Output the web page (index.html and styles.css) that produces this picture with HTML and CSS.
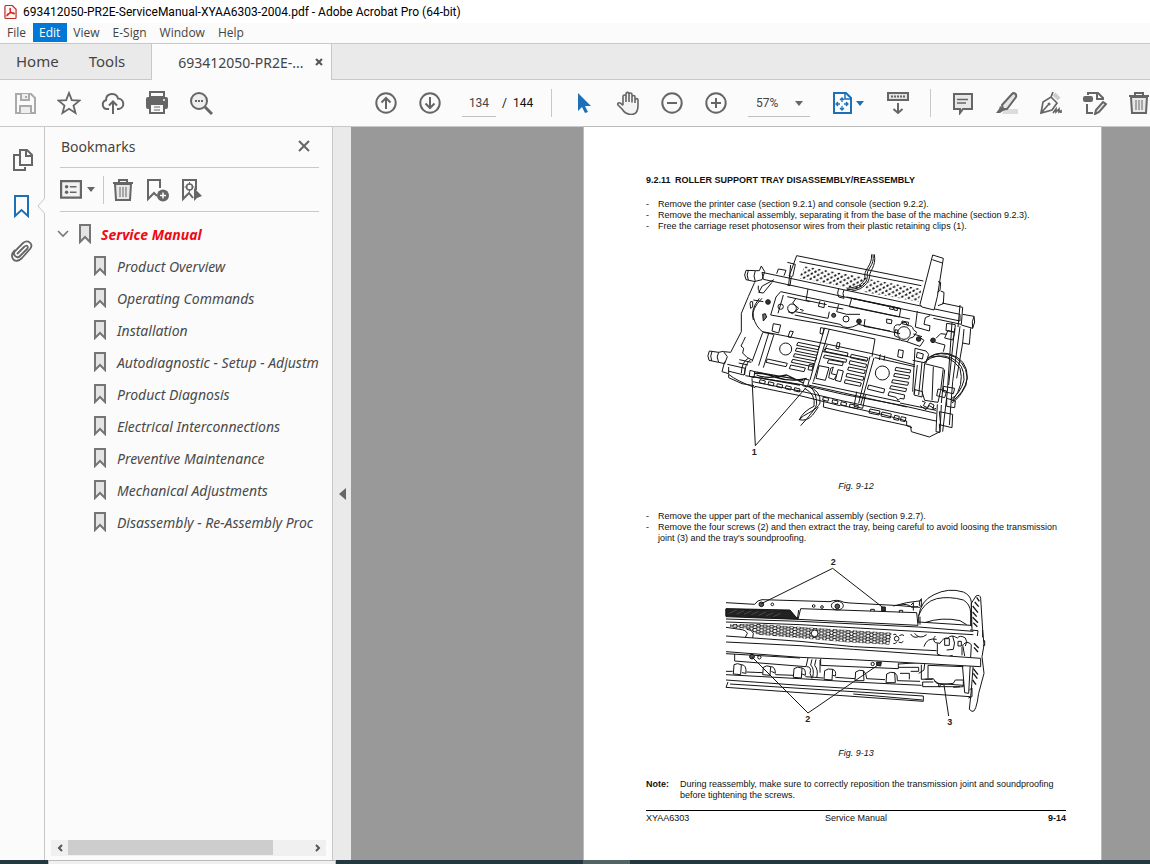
FILE: index.html
```html
<!DOCTYPE html>
<html lang="en">
<head>
<meta charset="utf-8">
<title>693412050-PR2E-ServiceManual-XYAA6303-2004.pdf - Adobe Acrobat Pro (64-bit)</title>
<link rel="stylesheet" href="styles.css">
</head>
<body>
<svg class="defs" aria-hidden="true">
  <symbol id="bm" viewBox="0 0 12 20"><path d="M1 1H11V18L6 13L1 18Z" fill="#e4e4e4" stroke="#757575" stroke-width="2"/></symbol>
  <symbol id="caret" viewBox="0 0 8 5"><path d="M0 0H8L4 5Z" fill="currentColor"/></symbol>
  <symbol id="trash" viewBox="0 0 24 24"><g fill="none" stroke="currentColor" stroke-width="2"><path d="M2 5H22M8 5V2H16V5"/><path d="M4 6L5 22H19L20 6Z" fill="#e8e8e8"/><path d="M9 9V19M12 9V19M15 9V19" stroke-width="1"/></g></symbol>
</svg>

<header class="titlebar">
  <svg class="logo" viewBox="0 0 14 16"><path d="M1 2Q1 1 2 1H9L13 5V14Q13 15 12 15H2Q1 15 1 14Z" fill="#fff4f3" stroke="#b3332b" stroke-width="1.3"/><path d="M3 12C5 11 7 8 7 5C7 3.600 6 4 6.300 5.500C7 8 9 10 11 10C12 9 9 8.500 7 9C5 9.400 3 10.500 3 12Z" fill="none" stroke="#d3241b" stroke-width="1.200"/></svg>
  <h1>693412050-PR2E-ServiceManual-XYAA6303-2004.pdf - Adobe Acrobat Pro (64-bit)</h1>
</header>
<nav class="menubar" aria-label="Menu">
  <button>File</button><button class="active">Edit</button><button>View</button><button>E-Sign</button><button>Window</button><button>Help</button>
</nav>
<nav class="tabs" aria-label="Tabs">
  <button class="tab-home">Home</button><button class="tab-tools">Tools</button>
  <div class="tab-doc"><button>693412050-PR2E-...</button><button class="tab-close" aria-label="Close tab"><svg width="8" height="8" viewBox="0 0 8 8"><path d="M1 1L7 7M7 1L1 7" stroke="#555" stroke-width="2"/></svg></button></div>
</nav>

<div class="toolbar" role="toolbar">
  <div class="group file-group">
    <button aria-label="Save" class="dim"><svg viewBox="0 0 24 24"><g fill="none" stroke="currentColor" stroke-width="2"><path d="M3 3H18L22 7V22H3Z"/><path d="M8 3V9H16V3M7 22V15H18V22" fill="#eee"/><path d="M13 5V7"/></g></svg></button>
    <button aria-label="Star"><svg viewBox="0 0 24 24"><path d="M12 2L14.800 9.200L22.500 9.600L16.500 14.500L18.500 22L12 17.800L5.500 22L7.500 14.500L1.500 9.600L9.200 9.200Z" fill="none" stroke="currentColor" stroke-width="1.800"/></svg></button>
    <button aria-label="Upload"><svg viewBox="0 0 24 24"><g fill="none" stroke="currentColor" stroke-width="2"><path d="M8 18H6A4.500 4.500 0 0 1 5 9.200C5 1.500 15.500 1 17 7.500A5.300 5.300 0 0 1 18 18H16M12 23V11M8 14.500L12 10.500L16 14.500"/></g></svg></button>
    <button aria-label="Print"><svg viewBox="0 0 24 24"><path d="M5 1H19V6H5Z" fill="none" stroke="currentColor" stroke-width="2"/><rect x="1" y="6" width="22" height="12" rx="2" fill="currentColor"/><path d="M5 13H19V22H5Z" fill="#fafafa" stroke="currentColor" stroke-width="2"/><path d="M9 16H15M9 19H15" stroke="currentColor"/><path d="M18 9H20" stroke="#fff" stroke-width="1.500"/></svg></button>
    <button aria-label="Find"><svg viewBox="0 0 24 24"><circle cx="10" cy="10" r="8" fill="#eee" stroke="currentColor" stroke-width="2"/><path d="M16 16L23 23" stroke="currentColor" stroke-width="3"/><path d="M6 10H14" stroke="currentColor" stroke-width="2" stroke-dasharray="2 1"/></svg></button>
  </div>
  <div class="group page-group">
    <button aria-label="Previous page"><svg viewBox="0 0 24 24"><g fill="none" stroke="currentColor" stroke-width="2"><circle cx="12" cy="12" r="9.700"/><path d="M12 18V7M7.500 11.500L12 7L16.500 11.500"/></g></svg></button>
    <button aria-label="Next page"><svg viewBox="0 0 24 24"><g fill="none" stroke="currentColor" stroke-width="2"><circle cx="12" cy="12" r="9.700"/><path d="M12 6V17M7.500 12.500L12 17L16.500 12.500"/></g></svg></button>
    <input class="page-no" type="text" value="134" aria-label="Page number"><span class="page-total">/&nbsp; 144</span>
  </div>
  <div class="group view-group">
    <button aria-label="Select" class="blue"><svg viewBox="0 0 24 24"><path d="M6 2V20L10 16L13 22L16 21L13 15H19Z" fill="currentColor"/></svg></button>
    <button aria-label="Pan"><svg viewBox="0 0 24 24"><path d="M7 14V5.500C7 3.500 10 3.500 10 5.500V11V3C10 .8 13 .8 13 3V11V3.500C13 1.500 16 1.500 16 3.500V11.500V6C16 4 19 4 19 6V12V9C19 7.200 22 7.200 22 9V15C22 21 19 23.500 15 23.500C10 23.500 8 21 6 18L2 14C1 12 3 11 5 12.500L7 14.500" fill="#f4f4f4" stroke="currentColor" stroke-width="1.600"/></svg></button>
    <button aria-label="Zoom out"><svg viewBox="0 0 24 24"><g fill="none" stroke="currentColor" stroke-width="2"><circle cx="12" cy="12" r="9.700"/><path d="M7 12H17"/></g></svg></button>
    <button aria-label="Zoom in"><svg viewBox="0 0 24 24"><g fill="none" stroke="currentColor" stroke-width="2"><circle cx="12" cy="12" r="9.700"/><path d="M7 12H17M12 7V17"/></g></svg></button>
    <div class="zoom"><select aria-label="Zoom level"><option>57%</option></select><svg class="caret"><use href="#caret"/></svg></div>
    <button aria-label="Fit page" class="blue fit"><svg viewBox="0 0 24 24"><g fill="none" stroke="currentColor" stroke-width="2"><path d="M4 2H16L21 7V22H4Z"/><path d="M15 2V8H21" stroke-width="1.500"/><path d="M12 7V11M12 15V19M6 13H10M14 13H18M10 9L12 7L14 9M10 17L12 19L14 17M8 11L6 13L8 15M16 11L18 13L16 15" stroke-width="1.300"/></g></svg><svg class="caret"><use href="#caret"/></svg></button>
    <button aria-label="Scrolling"><svg viewBox="0 0 24 24"><path d="M2 2H22V9H2Z" fill="#e4e4e4" stroke="currentColor" stroke-width="2"/><path d="M5 5.500H19" stroke="currentColor" stroke-width="2" stroke-dasharray="2 1"/><path d="M12 12V22M7.500 18L12 22L16.500 18" fill="none" stroke="currentColor" stroke-width="2"/></svg></button>
  </div>
  <div class="group edit-group">
    <button aria-label="Comment"><svg viewBox="0 0 24 24"><path d="M3 3H21V18H12L9 22V18H3Z" fill="#e8e8e8" stroke="currentColor" stroke-width="2"/><path d="M6 8.500H17M6 12H15" stroke="currentColor" stroke-width="1.300"/></svg></button>
    <button aria-label="Highlight"><svg viewBox="0 0 24 24"><path d="M10 18H23V23H7Z" fill="#dcdcdc"/><path d="M7 14L17 3C19 1 22 3 21 6L12 18L8 18Z" fill="#e4e4e4" stroke="currentColor" stroke-width="2"/><path d="M5 15L11 19L8 20L5 22H1L4 18Z" fill="currentColor"/></svg></button>
    <button aria-label="Sign"><svg viewBox="0 0 24 24"><path d="M15 3L20 8" stroke="#ccc" stroke-width="4"/><path d="M2 22L4 11L12 6L18 12L13 19ZM2 22L9 14M12 6L14 1" fill="none" stroke="currentColor" stroke-width="1.700"/><circle cx="10" cy="13" r="1.500" fill="currentColor"/><path d="M14 22L17 18V21L20 18V21L22 20V22" fill="none" stroke="currentColor" stroke-width="1.700"/></svg></button>
    <button aria-label="Edit PDF"><svg viewBox="0 0 24 24"><path d="M5 4V2H15L20 7V9M4 13V22H10M14 2V8H20" fill="none" stroke="currentColor" stroke-width="2"/><rect y="5" width="10" height="6" rx="2" fill="currentColor"/><path d="M12 23L13 19L20 11L23 13L16 21Z" fill="#eee" stroke="currentColor" stroke-width="2"/></svg></button>
    <button aria-label="Delete"><svg><use href="#trash"/></svg></button>
  </div>
</div>

<main class="workspace">
  <nav class="rail" aria-label="Panels">
    <button aria-label="Thumbnails"><svg viewBox="0 0 24 24"><g fill="none" stroke="currentColor" stroke-width="2"><path d="M8 7H3V22H14V19"/><path d="M9 2H16L21 7V17H9ZM15 2V8H21"/></g></svg></button>
    <button aria-label="Bookmarks" class="blue"><svg viewBox="0 0 24 24"><path d="M4 2H17V22L10.500 16L4 22Z" fill="none" stroke="currentColor" stroke-width="2"/></svg></button>
    <button aria-label="Attachments"><svg viewBox="0 0 24 24"><path d="M6 14L13 7C16 4 18 7 16 9L9 16C6 19 1 15 4 11L12 3C17 -1 23 4 19 9L11 18C8 21 4 22 2 19C0 16 1 13 4 10" fill="none" stroke="currentColor" stroke-width="1.800"/></svg></button>
    <svg class="notch" width="8" height="16" viewBox="0 0 8 16"><path d="M8 0L1 8L8 16" fill="#fbfbfb" stroke="#c8c8c8"/></svg>
  </nav>
  <aside class="panel">
    <div class="panel-head"><h2>Bookmarks</h2><button aria-label="Close panel"><svg width="12" height="12" viewBox="0 0 12 12"><path d="M1 1L11 11M11 1L1 11" stroke="#666" stroke-width="2"/></svg></button></div>
    <div class="panel-tools">
      <button aria-label="Options" class="options"><svg class="list-icon" viewBox="0 0 20 18"><path d="M1 1H19V16H1Z" fill="#f2f2f2" stroke="currentColor" stroke-width="2"/><path d="M9 6H15M9 11H15" stroke="currentColor" stroke-width="1.500"/><circle cx="6" cy="6" r="1.600" fill="currentColor"/><circle cx="6" cy="11" r="1.600" fill="currentColor"/></svg><svg class="caret"><use href="#caret"/></svg></button>
      <button aria-label="Delete bookmark"><svg><use href="#trash"/></svg></button>
      <button aria-label="New bookmark"><svg viewBox="0 0 24 24"><path d="M15 10V2H3V21L9 15L12 18" fill="none" stroke="currentColor" stroke-width="2"/><circle cx="18" cy="17.500" r="6" fill="currentColor"/><path d="M15 17.500H21M18 14.500V20.500" stroke="#fff" stroke-width="1.500"/></svg></button>
      <button aria-label="Find bookmark"><svg viewBox="0 0 24 24"><path d="M17 12V2H4V21L10 15L14 20" fill="none" stroke="currentColor" stroke-width="2"/><circle cx="10.500" cy="9" r="3" fill="none" stroke="currentColor" stroke-width="1.500"/><path d="M10.500 4V7M10.500 11V14M5.500 9H8.500M12.500 9H15.500" stroke="currentColor"/><path d="M15 10V23L18 20L23 18Z" fill="currentColor"/></svg></button>
    </div>
    <ul class="tree">
      <li class="root"><button aria-label="Collapse" class="twist"><svg width="12" height="8" viewBox="0 0 12 8"><path d="M1 1L6 6L11 1" fill="none" stroke="#777" stroke-width="1.600"/></svg></button><svg class="bm"><use href="#bm"/></svg><a href="#p">Service Manual</a></li>
      <li><svg class="bm"><use href="#bm"/></svg><a href="#p">Product Overview</a></li>
      <li><svg class="bm"><use href="#bm"/></svg><a href="#p">Operating Commands</a></li>
      <li><svg class="bm"><use href="#bm"/></svg><a href="#p">Installation</a></li>
      <li><svg class="bm"><use href="#bm"/></svg><a href="#p">Autodiagnostic - Setup - Adjustm</a></li>
      <li><svg class="bm"><use href="#bm"/></svg><a href="#p">Product Diagnosis</a></li>
      <li><svg class="bm"><use href="#bm"/></svg><a href="#p">Electrical Interconnections</a></li>
      <li><svg class="bm"><use href="#bm"/></svg><a href="#p">Preventive Maintenance</a></li>
      <li><svg class="bm"><use href="#bm"/></svg><a href="#p">Mechanical Adjustments</a></li>
      <li><svg class="bm"><use href="#bm"/></svg><a href="#p">Disassembly - Re-Assembly Proc</a></li>
    </ul>
    <div class="hscroll"><button aria-label="Scroll left"><svg width="6" height="8" viewBox="0 0 6 8"><path d="M5 1L2 4L5 7" fill="none" stroke="#555" stroke-width="2"/></svg></button><div class="track"><div class="thumb"></div></div><button aria-label="Scroll right"><svg width="6" height="8" viewBox="0 0 6 8"><path d="M1 1L4 4L1 7" fill="none" stroke="#555" stroke-width="2"/></svg></button></div>
  </aside>
  <button class="splitter" aria-label="Hide panel"><svg width="7" height="12" viewBox="0 0 7 12"><path d="M7 0V12L0 6Z" fill="#666"/></svg></button>
  <section class="viewer">
    <article class="page" id="p">
      <h3><span>9.2.11</span> ROLLER SUPPORT TRAY DISASSEMBLY/REASSEMBLY</h3>
      <ul class="steps">
        <li>Remove the printer case (section 9.2.1) and console (section 9.2.2).</li>
        <li>Remove the mechanical assembly, separating it from the base of the machine (section 9.2.3).</li>
        <li>Free the carriage reset photosensor wires from their plastic retaining clips (1).</li>
      </ul>
      <figure class="fig1">
        <svg viewBox="0 0 870 660" width="290" height="220" role="img" aria-label="Mechanical assembly, wires and clips">
          <defs><pattern id="holes" width="20" height="16" patternUnits="userSpaceOnUse" patternTransform="rotate(11)"><path d="M3 7L8 2M13 15L18 10" stroke="#111" stroke-width="5.500"/></pattern></defs>
          <g class="ink">
            <!-- rear perforated tray -->
            <path d="M268 92L290 32L670 108M298 50L664 122M262 52L286 58L278 95M235 72L258 76L252 92M235 72L230 86"/>
            <path d="M314 64L502 99L482 136L296 100ZM510 103L665 132L655 170L490 140Z" fill="url(#holes)" stroke="none"/>
            <path d="M519 28C525 65 497 70 502 95C501 120 475 134 440 134M515 28C517 64 489 74 495 98C490 120 466 128 440 130M523 28C530 66 506 78 508 99C502 124 475 136 455 138"/>
            <!-- cross bar -->
            <path d="M186 82L430 134L780 208V228L430 155L190 103Z" fill="#fff"/>
            <path d="M272 60L266 120M266 92L274 94L270 122L262 120M416 130Q410 145 416 156L432 160Q426 144 432 134"/>
            <!-- left side frame and rollers -->
            <path d="M138 76Q130 90 138 104L166 110Q158 92 166 77ZM145 76Q138 90 145 105M166 77L178 77L184 63L194 80L186 104L166 109M164 112L145 155L124 205V260L92 322L72 320"/>
            <path d="M28 318Q20 333 27 346L56 352Q47 335 56 322ZM36 319Q29 333 35 348M56 322L70 319L82 335L74 356L56 352M74 350L66 380L86 386L86 366M82 358L136 370L132 390L84 378"/>
            <path d="M222 104L187 123L176 142L190 144L216 112M175 122Q172 134 180 142M186 160Q154 192 160 215Q166 245 190 262L220 268M178 160Q150 195 160 225M160 165L190 170M152 190L150 175Q150 167 158 170V186ZM123 303Q130 290 136 276M123 303L131 310L128 324Q140 340 158 346M188 263L156 350M222 268L190 368M206 265L176 362M220 236L242 240L236 264L216 258Z"/>
            <path d="M188 208L196 206L200 216L190 228Z" fill="#777"/>
            <circle cx="204" cy="171" r="7" fill="#333"/><circle cx="242" cy="185" r="8"/><circle cx="276" cy="190" r="13"/><circle cx="401" cy="211" r="6" fill="#555"/><circle cx="438" cy="222" r="9"/><circle cx="477" cy="229" r="7" fill="#333"/>
            <!-- carriage channel -->
            <path d="M242 140L630 222M242 140L228 156L212 210L420 246L600 285M250 150L234 205M262 155L330 170M288 160L278 174L296 190L278 206L264 200M324 132L318 166L380 179M360 168L355 184L372 188L374 172M384 184L430 192M388 200L384 220L286 200M284 210L420 238Q440 258 475 238L600 266M416 178L410 200L440 208L480 208M455 160L448 185L598 216L602 192L455 160M440 156L602 190M495 222L492 244L570 258M300 193L310 196L306 200"/>
            <path d="M270 258L280 260L272 278L264 275ZM362 248L372 250L368 268L360 265ZM412 292L420 294L416 312L408 309ZM570 183L580 186V194L569 192ZM582 186L592 189V197L582 195Z"/>
            <!-- base plate, panels and vents -->
            <path d="M188 260L375 296L525 328L645 360M375 250L525 282L516 335M388 252L340 410M374 248L330 405M382 300L370 320L500 346M522 338L482 480M510 334L476 475M525 338L645 365M538 345L541 328M552 347L554 332M645 310L638 440"/>
            <circle cx="257" cy="312" r="18"/><circle cx="547" cy="384" r="21"/>
            <path d="M294 292L358 305L354 314L290 301ZM290 309L354 322L350 331L286 318ZM284 326L350 339L346 348L280 335ZM278 343L342 356L338 365L274 352ZM202 342L262 355L258 365L198 352ZM272 360L316 369L312 380L268 371ZM328 358L340 360L336 376L324 374Z"/>
            <path d="M378 310L444 324L442 333L374 319ZM374 330L440 343L438 352L370 338ZM454 328L504 339L501 349L451 338ZM450 347L500 358L497 368L447 357ZM446 366L496 376L493 386L443 375ZM441 385L492 396L489 406L438 395ZM436 404L484 414L481 424L433 414ZM386 344L430 352L427 362L382 354ZM357 362L387 368L376 406L348 400ZM392 370L400 366L394 386L410 390L402 404L386 398ZM414 374L430 378L422 410L406 406Z"/>
            <path d="M588 367L632 375L630 384L585 376ZM584 385L629 393L626 402L581 394ZM578 404L626 412L623 421L575 413ZM573 422L620 431L617 440L569 431ZM568 440L614 450L612 462L600 460L594 466L588 457L564 451ZM506 420L554 432L551 444L502 432Z"/>
            <!-- front edge -->
            <path d="M136 392L300 418L430 448L600 480L708 505M158 410L300 438L430 468L708 528M164 424L300 452L420 482M336 414L600 470M325 420L620 486M470 440L462 484L488 490L496 450M86 388Q110 408 166 428M86 388V398L126 416L162 422M372 464L370 486L420 498M420 480L546 508L620 528V542L636 548M420 498L632 544L634 560L688 576L720 560L718 536"/>
            <path d="M180 404l16 4-2 9-16-4zM206 410l16 4-2 9-16-4zM232 416l16 4-2 9-16-4zM258 422l16 4-2 9-16-4zM284 428l16 4-2 9-16-4zM370 456l16 4-2 9-16-4zM398 464l16 4-2 9-16-4zM424 470l16 4-2 9-16-4zM450 477l25 5-2 9-25-5zM510 492l30 6-3 12-30-6zM546 501l28 6-3 12-28-6zM584 511l14 3-3 12-14-3zM604 515l14 3-3 12-14-3z"/>
            <path d="M162 380L310 406M162 386Q190 382 224 396Q270 412 320 400M158 395L300 420M170 390Q200 404 260 390L310 414" stroke-width="4"/>
            <path d="M145 340Q125 350 124 385M152 344Q134 356 134 390M118 344L154 352M116 354L144 360M314 402L328 405L322 426L308 422ZM150 376L164 380L162 398L148 394Z"/>
            <path d="M322 424Q364 436 360 474Q355 488 326 504Q308 512 298 524Q320 530 338 510L355 486M330 426Q350 440 350 478Q348 492 302 542M314 430Q348 448 342 484Q310 498 298 524"/>
            <!-- upright bracket and right end -->
            <path d="M698 30L730 40L712 155L702 195L666 186L660 178Z" fill="#fff"/>
            <path d="M697 44L727 54M714 110L722 112L720 136L712 142M722 138L732 142L730 176L714 182M726 174L788 187L784 238L700 220M780 180L774 246M788 208L822 214Q814 228 818 250L784 240M822 214Q828 230 818 250M812 250L808 298L788 294L792 252M652 198L646 246L688 258L690 242L672 238L676 218L690 212M756 232L742 440L728 560M780 244L758 410L748 540M764 250L746 420M788 294L770 400"/>
            <circle cx="612" cy="264" r="19"/><path d="M582 250Q584 236 600 240L606 232H618L622 242Q638 240 640 254L650 262L640 276L628 280L622 290L602 286L596 278L584 272Z"/>
            <path d="M560 222l16 3-2 11-14-2zM586 254l8 2-1 8-8-2zM606 228l20 4-2 8-18-4zM596 314l14 3-3 22-14-4zM652 322l18 5-3 15-18-5zM645 310L678 318L686 328L678 354L638 346M620 290L660 304L672 286L658 276"/>
            <circle cx="656" cy="282" r="7" fill="#333"/><circle cx="699" cy="286" r="7" fill="#333"/><path d="M640 267l26 8M708 280L722 266L740 268M706 292L735 300L730 320M740 235l26 4-2 22-26-4zM744 256l20 7-6 22-24-6z"/>
            <!-- motor and cable loop -->
            <path d="M674 356L666 440L674 466L714 472L722 436L730 370L674 356M652 360L642 446M666 352L656 450M700 365L696 466M734 374L724 474M645 434L668 440L666 456L642 450ZM714 432L740 438L734 458L710 452Z"/>
            <path d="M678 346Q702 318 746 326Q804 342 802 400Q792 446 754 470M672 352Q712 320 756 340Q794 358 792 405Q782 446 750 464M682 340Q720 314 765 336Q812 370 798 420Q780 458 756 474M690 336Q748 324 780 370Q794 420 758 466"/>
            <path d="M666 468l10 4-6 10 12 6 8-14 12 6-4 14 10-4M660 482l18 12 10-12 14 8M730 424l34 6-4 16-30-6zM740 460l26 8-2 20-24-4zM718 500L758 508L756 548L722 540ZM712 478L708 560L720 562L724 480M600 474L708 496"/>
            <path d="M156 400L166 602L318 428"/>
          </g>
          <text x="155" y="630">1</text>
        </svg>
        <figcaption>Fig. 9-12</figcaption>
      </figure>
      <ul class="steps">
        <li>Remove the upper part of the mechanical assembly (section 9.2.7).</li>
        <li>Remove the four screws (2) and then extract the tray, being careful to avoid loosing the transmission<br>joint (3) and the tray's soundproofing.</li>
      </ul>
      <figure class="fig2">
        <svg viewBox="0 0 825 540" width="275" height="180" role="img" aria-label="Tray screws and transmission joint">
          <defs><pattern id="mesh" width="20" height="18" patternUnits="userSpaceOnUse" patternTransform="rotate(3)"><path d="M0 5L4 1H10L14 5L10 9H4ZM14 5H20M10 9L13 14L20 13M4 9L1 14L4 18M13 14L10 18" fill="none" stroke="#111" stroke-width="3"/></pattern></defs>
          <g class="ink">
            <!-- top plate -->
            <path d="M18 158L104 163Q112 150 126 149L330 155Q350 146 372 157L390 159L540 167L600 172M18 176L210 180L234 208L18 200Z"/>
            <path d="M18 177L210 182L232 207L18 198Z" fill="#222"/><path d="M28 190l22-10M50 192l22-10M72 193l22-10M94 194l22-10M116 196l22-10M138 198l22-10M160 200l22-10" stroke="#999" stroke-width="1"/>
            <path d="M242 176L590 188L594 226L234 208ZM236 180L232 208M18 207L240 214L595 231L760 244M18 216L240 224L760 254"/>
            <circle cx="124" cy="163" r="7" fill="#555"/><circle cx="157" cy="163" r="4"/><circle cx="281" cy="168" r="4"/><circle cx="306" cy="171" r="4"/><ellipse cx="352" cy="167" rx="18" ry="13"/><circle cx="352" cy="169" r="7" fill="#555"/><path d="M452 184V178H463V184M538 188V181H548V187"/><path d="M485 171h11v12h-11z" fill="#333"/>
            <!-- perforated strip -->
            <path d="M30 222L120 222L290 234L515 248L508 284L380 277L112 254L88 238L30 232Z" fill="url(#mesh)" stroke="none"/><path d="M18 232L60 238Q78 240 82 250L76 262M80 238Q96 238 100 250L98 264M18 258L240 274L400 290L650 302"/>
            <circle cx="284" cy="250" r="10" fill="#fff"/><circle cx="530" cy="266" r="7"/><path d="M520 254q6-4 10 2M520 280q6 4 10-4M538 257q10-6 14 0M536 276q8 6 14-2"/>
            <!-- roller row -->
            <path d="M44 312V333L258 350L264 324M302 326V346L535 356V340M260 350Q276 350 270 370L276 386M276 328L272 345Q284 356 278 382M288 328L284 346Q296 360 290 384M300 330V368M18 364H38M80 366L128 368M166 374L222 376M256 380L310 384M346 382L405 386M440 386L495 389M532 392L600 394M18 374L240 386L400 396L605 406M18 390L240 406L400 416L750 440"/>
            <path d="M40 372L42 344Q52 338 64 344L62 374ZM128 374L130 352Q140 344 152 350L150 376ZM220 382L222 356Q232 348 246 354L244 384ZM312 388L314 362Q324 354 338 358L336 390ZM405 392L407 366Q418 358 430 362L432 392ZM498 398L500 372Q510 364 524 368L526 398Z" fill="#fff"/>
            <path d="M64 344Q80 344 78 370L66 368M152 350Q166 350 166 370L154 364M246 354Q258 356 256 376L246 372M338 358Q350 362 346 378L338 376M430 362Q440 370 440 386M524 368Q534 374 532 392"/>
            <circle cx="96" cy="320" r="6" fill="#555"/><circle cx="118" cy="322" r="5"/><circle cx="458" cy="342" r="5"/><path d="M470 336h14l-2 12-12-2z" fill="#333"/><path d="M535 342L600 338M535 352H596V364H572M540 370H568V388M596 370L612 360L614 340M624 346V386"/>
            <path d="M24 396L18 412L240 428L610 454M30 402L610 438V454M400 432L608 450"/>
            <!-- motor cover -->
            <path d="M596 198Q602 152 642 134Q685 112 730 126Q752 136 754 156V230M596 220V196Q612 156 650 146Q688 138 730 150Q750 162 752 186V228M596 216L752 226M614 218Q666 200 720 212L740 224M600 200V224M604 146Q596 152 598 166L604 170V146M604 152L560 158L520 168M594 170L575 172Q560 158 540 166M572 166l8-8v24"/>
            <!-- right side plate -->
            <path d="M756 240L754 160L768 138Q780 132 782 145L788 240L792 285L786 320L792 370L776 430Q768 490 756 484L748 478L754 420L760 340M788 240V262M790 272h4v14h-5M750 240L774 242L772 258"/>
            <path d="M770 142l8 12M764 156l12 14M758 168l16 20M758 186l12 14M758 202l16 16M760 218l12 12M762 280l14 14M762 292l12 14M760 356l14 18M760 370l12 16M758 390l10 14" stroke-width="4"/>
            <path d="M572 252Q580 266 596 260M584 250Q598 270 620 254M612 290Q620 262 650 268M646 258Q636 268 646 278L660 280Q670 262 684 264Q694 252 712 264Q720 254 736 264Q744 274 736 288M652 280V312L676 322L698 316M674 266h14v20h-14zM714 274h10v14h-10zM698 258q10 22 2 40l-20 2M726 290V316"/>
            <path d="M730 284Q740 270 754 284L746 430L734 428L726 330M728 284L734 318M604 344V388L640 386L650 400L730 406M614 388H638M640 396H608V410H660M642 392L662 404L700 400L706 390H730V410L700 412M656 400V410H720M748 420L756 414V440L745 444M624 346L730 350M662 404L658 410"/>
            <!-- long rail over the joint -->
            <path d="M18 276L240 287L400 298L782 325L780 350L400 329L240 322L18 305Z" fill="#fff" stroke="none"/>
            <path d="M18 276L240 287L400 298L782 325V350L400 329L240 322L18 305M18 311L240 324"/>
            <circle cx="96" cy="320" r="7" fill="#555"/>
            <path d="M124 161L338 55L488 172M97 322L264 489L474 345M672 405L686 498"/>
          </g>
          <text x="332" y="45">2</text><text x="256" y="516">2</text><text x="682" y="526">3</text>
        </svg>
        <figcaption>Fig. 9-13</figcaption>
      </figure>
      <div class="note"><strong>Note:</strong><p>During reassembly, make sure to correctly reposition the transmission joint and soundproofing<br>before tightening the screws.</p></div>
      <footer><span>XYAA6303</span><span>Service Manual</span><strong>9-14</strong></footer>
    </article>
  </section>
</main>
<div class="taskbar"><span class="seg-a"></span><span class="seg-b"></span><span class="seg-c"></span><span class="seg-d"></span></div>
</body>
</html>
```
FILE: styles.css
```css
* { box-sizing: border-box; margin: 0; padding: 0; }
body { height: 100vh; overflow: hidden; display: flex; flex-direction: column; background: #fbfbfb; color: #444; font-family: "Noto Sans", sans-serif; font-size: 12px; }
button { border: 0; background: none; color: inherit; font: inherit; white-space: nowrap; }
svg { display: block; flex: none; }
.defs { position: absolute; width: 0; height: 0; }
.blue { color: #1d70b8; }
.caret { width: 8px; height: 5px; }

.titlebar { height: 23px; display: flex; align-items: center; gap: 6px; padding-left: 4px; background: #fff; color: #000; }
.titlebar h1 { font: 12px Roboto, sans-serif; white-space: nowrap; }
.logo { width: 13px; height: 16px; }
.menubar { height: 20px; display: flex; padding: 0 0 1px 1px; font-family: "Open Sans", sans-serif; }
.menubar button { padding: 0 7px 0 6px; line-height: 19px; }
.menubar .active { background: #0078d7; color: #fff; }

.tabs { height: 37px; flex: none; display: flex; background: #eaeaea; border: solid #c8c8c8; border-width: 1px 0; font-size: 15px; }
.tab-home { padding: 0 15px 2px 16px; }
.tab-tools { padding: 0 26px 2px 15px; }
.tab-doc { height: 36px; display: flex; align-items: center; gap: 11px; padding: 0 8px 0 26px; background: #fbfbfb; border: solid #c8c8c8; border-width: 0 1px; font-size: 14px; }

.toolbar { height: 47px; flex: none; display: flex; align-items: center; border-bottom: 1px solid #c8c8c8; color: #666; overflow: hidden; padding-left: 3px; }
.group { display: flex; align-items: center; flex: none; height: 28px; }
.group button { width: 44px; display: flex; align-items: center; justify-content: center; }
.toolbar button svg:not(.caret) { width: 24px; height: 24px; }
.group .dim { color: #aaa; }
.page-group { margin-left: 141px; padding-right: 19px; border-right: 1px solid #c8c8c8; }
.page-no { width: 34px; height: 28px; margin: 0 6px 0 10px; border: 0; border-bottom: 1px solid #c0c0c0; background: none; text-align: center; font: 12px Roboto, sans-serif; color: #444; }
.page-total { width: 30px; font: 12px Roboto, sans-serif; color: #111; white-space: nowrap; }
.view-group { padding: 0 10px; border-right: 1px solid #c8c8c8; }
.zoom { position: relative; width: 62px; height: 28px; margin: 0 19px 0 10px; }
.zoom select { appearance: none; width: 100%; height: 100%; padding-left: 8px; border: 0; border-bottom: 1px solid #c0c0c0; border-radius: 0; background: none; font: 12px Roboto, sans-serif; color: #444; }
.zoom .caret { position: absolute; right: 7px; top: 12px; pointer-events: none; }
.group .fit { width: 36px; margin-right: 11px; gap: 2px; }
.edit-group { padding-left: 10px; }

.workspace { flex: 1; min-height: 0; display: flex; }
.rail { position: relative; width: 45px; flex: none; display: flex; flex-direction: column; align-items: flex-start; gap: 22px; padding: 21px 0 0 11px; border-right: 1px solid #c8c8c8; color: #666; }
.rail button svg { width: 24px; height: 24px; }
.notch { position: absolute; right: -1px; top: 71px; }
.panel { width: 287px; flex: none; display: flex; flex-direction: column; padding-bottom: 4px; }
.panel-head { height: 41px; margin: 0 13px 0 15px; padding: 0 9px 2px 1px; display: flex; align-items: center; justify-content: space-between; border-bottom: 1px solid #c8c8c8; }
.panel-head h2 { font: 14px "Noto Sans", sans-serif; }
.panel-tools { height: 44px; margin: 0 13px 0 15px; display: flex; align-items: center; gap: 10px; border-bottom: 1px solid #c8c8c8; color: #666; }
.panel-tools svg:not(.caret) { width: 24px; height: 24px; }
.panel-tools svg.list-icon { width: 22px; height: 20px; }
.options { display: flex; align-items: center; gap: 5px; height: 28px; padding-right: 8px; margin-right: -3px; border-right: 1px solid #c8c8c8; }
.tree { flex: 1; margin: 6px 6px 0 0; list-style: none; overflow: hidden; font: italic 14px "Noto Sans", sans-serif; }
.tree li { height: 32px; display: flex; align-items: center; gap: 11px; padding-left: 49px; white-space: nowrap; }
.tree .root { padding-left: 12px; gap: 10px; font-weight: bold; }
.tree a { color: #4a4a4a; text-decoration: none; }
.tree .root a { color: #ee0a14; }
.bm { width: 12px; height: 20px; }
.twist { width: 12px; }
.hscroll { height: 16px; margin: 0 6px; display: flex; background: #f0f0f0; }
.hscroll button { width: 17px; display: flex; align-items: center; justify-content: center; }
.track { flex: 1; }
.thumb { width: 85%; height: 15px; background: #cdcdcd; }
.splitter { width: 19px; flex: none; display: flex; align-items: center; padding-left: 6px; background: #eaeaea; border-left: 1px solid #c8c8c8; }

.viewer { flex: 1; display: flex; justify-content: flex-end; padding-right: 49px; background: #999; }
.page { width: 517px; padding: 48px 35px 0 62px; background: #fff; color: #111; font: 9px/11px "Liberation Sans", sans-serif; outline: 1px solid #bbb; white-space: nowrap; }
.page h3 { font-size: 9px; line-height: 11px; margin-bottom: 13px; }
.page h3 span { margin-right: 2px; }
.steps { list-style: none; }
.steps li { padding-left: 12px; position: relative; }
.steps li::before { content: "-"; position: absolute; left: 0; }
figure { display: flex; flex-direction: column; }
figcaption { text-align: center; font-style: italic; }
.fig1 { margin: 13px 0 19px 54px; }
.fig1 figcaption { margin: 16px 0 0 -54px; }
.fig2 { margin: 6px 0 20px 74px; }
.fig2 figcaption { margin: 18px 0 0 -74px; }
.ink { fill: none; stroke: #151515; stroke-width: 3; stroke-linejoin: round; }
figure text { font: bold 27px "Liberation Sans", sans-serif; fill: #222; }
.note { display: flex; }
.note strong { width: 34px; }
.page footer { margin-top: 9px; padding-top: 2px; border-top: 1px solid #000; display: grid; grid-template-columns: 1fr auto 1fr; }
.page footer strong { text-align: right; }

.taskbar { height: 4px; flex: none; display: flex; background: #24383f; }
.seg-a { width: 48px; }
.seg-b { width: 288px; background: #f0f0f0; border: 1px solid #bbb; border-bottom: 0; }
.seg-c { width: 247px; }
.seg-d { width: 47px; background: #536263; }
```
